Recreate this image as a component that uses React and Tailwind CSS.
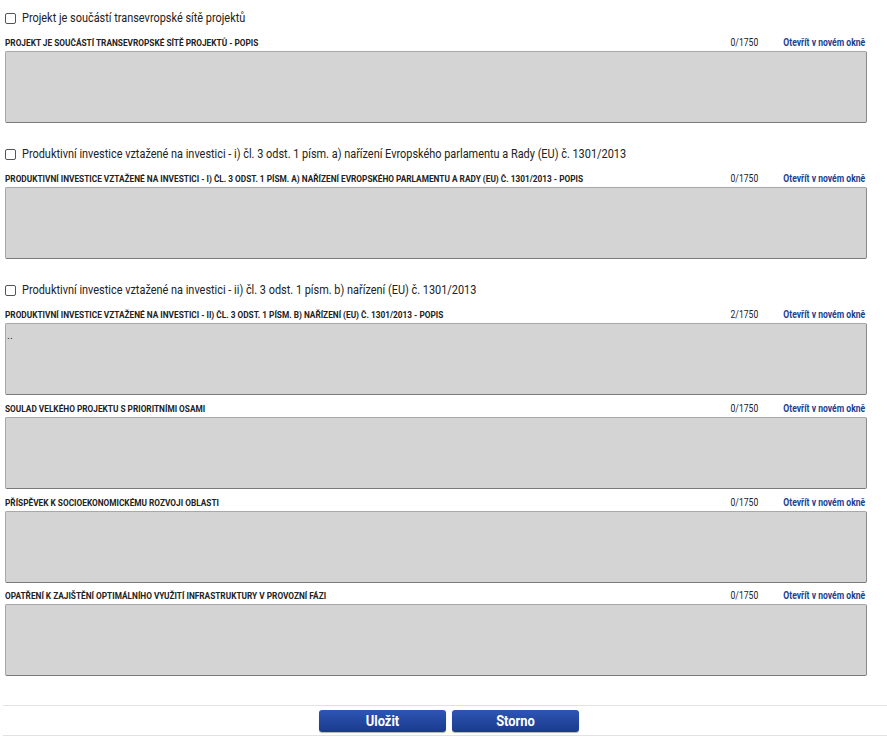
import React from 'react';

const font = { fontFamily: 'Roboto, "Open Sans", sans-serif' };
const narrow = 'inline-block whitespace-nowrap origin-left scale-x-[0.84]';
const narrowLabel = 'inline-block whitespace-nowrap origin-left scale-x-[0.92]';
const narrowR = 'inline-block whitespace-nowrap origin-right scale-x-[0.86]';

function CheckRow({ text }) {
  return (
    <label className="flex items-center h-[20px] pl-[5px] gap-[6px] text-[13px] text-[#222]">
      <span className="w-[11px] h-[11px] border border-[#555] rounded-[2px] bg-white shrink-0" />
      <span className={narrow}>{text}</span>
    </label>
  );
}

function Field({ label, count, value }) {
  return (
    <div className="px-[5px]">
      <div className="flex items-center h-[12px] leading-none text-[9px] font-bold w-[860px]">
        <div className="flex-1 min-w-0">
          <span className={`${narrowLabel} uppercase text-[#222]`}>{label}</span>
        </div>
        <span className={`${narrowR} font-normal text-[#222] text-[10px]`}>{count}</span>
        <span className="w-[12px]" />
        <a href="#" className={`${narrowR} text-[#213f8f] text-[10px]`}>Otevřít v novém okně</a>
      </div>
      <div className="mt-[2px] w-[862px] h-[72px] bg-[#d4d4d4] border border-[#a8a8a8] border-b-[#7a7a7a] border-r-[#8a8a8a] rounded-[2px] text-[11px] text-[#333] px-[1px] pt-[6px] leading-none">
        {value}
      </div>
    </div>
  );
}

export default function App() {
  return (
    <div className="w-[887px] h-[739px] bg-white overflow-hidden" style={font}>
      <div className="pt-[8px]">
        <CheckRow text="Projekt je součástí transevropské sítě projektů" />
        <div className="mt-[9px]">
          <Field label="Projekt je součástí transevropské sítě projektů - popis" count="0/1750" />
        </div>

        <div className="mt-[21px]">
          <CheckRow text="Produktivní investice vztažené na investici - i) čl. 3 odst. 1 písm. a) nařízení Evropského parlamentu a Rady (EU) č. 1301/2013" />
        </div>
        <div className="mt-[9px]">
          <Field label="Produktivní investice vztažené na investici - i) čl. 3 odst. 1 písm. a) nařízení Evropského parlamentu a Rady (EU) č. 1301/2013 - popis" count="0/1750" />
        </div>

        <div className="mt-[21px]">
          <CheckRow text="Produktivní investice vztažené na investici - ii) čl. 3 odst. 1 písm. b) nařízení (EU) č. 1301/2013" />
        </div>
        <div className="mt-[9px]">
          <Field label="Produktivní investice vztažené na investici - ii) čl. 3 odst. 1 písm. b) nařízení (EU) č. 1301/2013 - popis" count="2/1750" value=".." />
        </div>

        <div className="mt-[8px]">
          <Field label="Soulad velkého projektu s prioritními osami" count="0/1750" />
        </div>
        <div className="mt-[8px]">
          <Field label="Příspěvek k socioekonomickému rozvoji oblasti" count="0/1750" />
        </div>
        <div className="mt-[7px]">
          <Field label="Opatření k zajištění optimálního využití infrastruktury v provozní fázi" count="0/1750" />
        </div>
      </div>

      <div className="mt-[29px] ml-[3px] border-t border-b border-[#e2e2e2] pt-[4px] pb-[3px]">
        <div className="flex justify-center gap-[6px] pl-[8px]">
          <button className="w-[127px] h-[22px] rounded-[3px] bg-gradient-to-b from-[#2e56b6] to-[#1a3a8c] text-white text-[15px] font-bold leading-none shadow-[0_1px_1px_rgba(0,0,0,0.3)]">
            <span className="inline-block scale-x-[0.86]">Uložit</span>
          </button>
          <button className="w-[127px] h-[22px] rounded-[3px] bg-gradient-to-b from-[#2e56b6] to-[#1a3a8c] text-white text-[15px] font-bold leading-none shadow-[0_1px_1px_rgba(0,0,0,0.3)]">
            <span className="inline-block scale-x-[0.86]">Storno</span>
          </button>
        </div>
      </div>
    </div>
  );
}
